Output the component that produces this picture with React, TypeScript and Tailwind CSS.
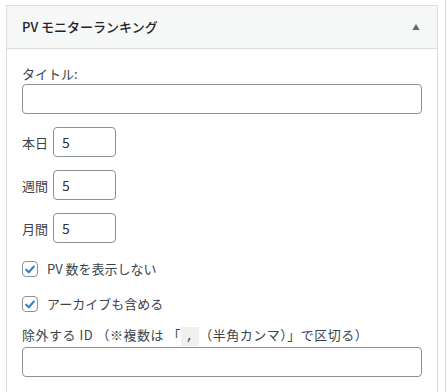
// React Imports
import { useState } from 'react';

const font = "font-['Noto_Sans_CJK_JP','Noto_Sans',sans-serif]";

const CountRow = ({ label, value }: { label: string; value: string }) => (
  <div className="flex items-center gap-[5px] mb-[13px]">
    <label className="w-[26px] text-[13px] leading-none text-[#3c434a]">{label}</label>
    <input
      type="text"
      defaultValue={value}
      className="h-[30px] w-[63px] rounded-[4px] border border-[#8c8f94] bg-white px-2 text-[14px] text-[#2c3338] outline-none"
    />
  </div>
);

const CheckRow = ({ label }: { label: string }) => {
  const [checked, setChecked] = useState(true);

  return (
    <label className="flex h-[22px] items-center gap-[9px] cursor-pointer">
      <span
        onClick={() => setChecked((prev) => !prev)}
        className="flex h-4 w-4 items-center justify-center rounded-[4px] border border-[#8c8f94] bg-white"
      >
        {checked && (
          <svg viewBox="0 0 16 16" className="h-[15px] w-[15px]">
            <path
              d="M3.6 8.2l3 3 5.8-6.6"
              fill="none"
              stroke="#3582c4"
              strokeWidth={2.4}
              strokeLinecap="round"
              strokeLinejoin="round"
            />
          </svg>
        )}
      </span>
      <span className="text-[13px] text-[#3c434a]">{label}</span>
    </label>
  );
};

const App = () => {
  return (
    <div className={`relative h-[392px] w-[448px] overflow-hidden bg-white ${font}`}>
      {/* Neighbour edge */}
      <div className="absolute right-[2px] top-0 h-full w-px bg-[#dcdcde]" />

      <div className="ml-[6px] mt-[5px] w-[432px] border border-[#dcdcde] bg-white">
        {/* Header */}
        <div className="flex h-[43px] items-center justify-between border-b border-[#dcdcde] bg-[#f6f7f7] pl-[15px] pr-[17px]">
          <h3 className="text-[13px] font-medium text-[#1d2327]">PV モニターランキング</h3>
          <svg viewBox="0 0 10 8" className="h-[6px] w-[8px]">
            <path d="M5 0L10 8H0z" fill="#646970" />
          </svg>
        </div>

        {/* Body */}
        <div className="px-[15px] pb-[15px] pt-[14px] text-[13px] text-[#3c434a]">
          <div className="mb-[13px]">
            <label className="block leading-[21px]">タイトル:</label>
            <input
              type="text"
              className="h-[30px] w-full rounded-[4px] border border-[#8c8f94] bg-white px-2 outline-none"
            />
          </div>

          <CountRow label="本日" value="5" />
          <CountRow label="週間" value="5" />
          <CountRow label="月間" value="5" />

          <div className="mt-[15px] flex flex-col gap-[13px]">
            <CheckRow label="PV 数を表示しない" />
            <CheckRow label="アーカイブも含める" />
          </div>

          <div className="mt-[9px]">
            <label className="block leading-[21px] tracking-[0.5px]">
              除外する ID （※複数は 「
              <code className="bg-[#f0f0f1] px-[5px] py-[2px] font-['Liberation_Mono',monospace] text-[13px]">,</code>
              （半角カンマ）」で区切る）
            </label>
            <input
              type="text"
              className="h-[30px] w-full rounded-[4px] border border-[#8c8f94] bg-white px-2 outline-none"
            />
          </div>
        </div>
      </div>
    </div>
  );
};

export default App;
